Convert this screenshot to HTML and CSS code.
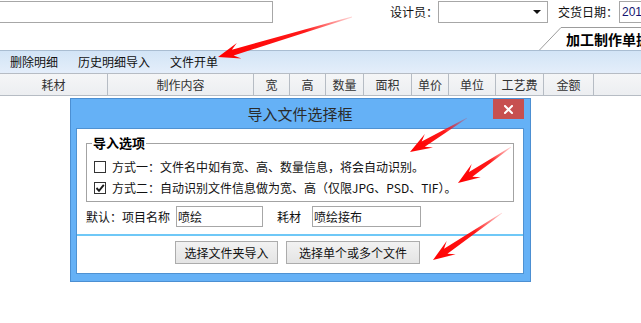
FILE: index.html
```html
<!DOCTYPE html>
<html lang="zh-CN">
<head>
<meta charset="utf-8">
<title>导入文件选择框</title>
<link rel="stylesheet" href="styles.css">
</head>
<body>
<div class="page">
  <div class="topbar">
    <div class="box box-main"></div>
    <span class="lbl lbl-designer">设计员：</span>
    <div class="box select"><span class="caret"></span></div>
    <span class="lbl lbl-date">交货日期：</span>
    <div class="box box-date">2018-06-12</div>
  </div>
  <div class="tabrow">
    <div class="tab">
      <svg class="tab-slant" width="22" height="23" viewBox="0 0 22 23"><line x1="0.5" y1="23" x2="22" y2="0.5" stroke="#9c9c9c" stroke-width="1"/></svg>
      <span class="tab-label">加工制作单据</span>
    </div>
  </div>
  <div class="toolbar">
    <span class="tool">删除明细</span>
    <span class="tool">历史明细导入</span>
    <span class="tool">文件开单</span>
  </div>
  <div class="grid-head">
    <div class="cell c1">耗材</div>
    <div class="cell c2">制作内容</div>
    <div class="cell c3">宽</div>
    <div class="cell c4">高</div>
    <div class="cell c5">数量</div>
    <div class="cell c6">面积</div>
    <div class="cell c7">单价</div>
    <div class="cell c8">单位</div>
    <div class="cell c9">工艺费</div>
    <div class="cell c10">金额</div>
    <div class="cell c11"></div>
  </div>
</div>

<div class="dialog">
  <div class="dialog-title">导入文件选择框</div>
  <div class="dialog-close">
    <svg width="9" height="9" viewBox="0 0 9 9"><path d="M1 1L8 8M8 1L1 8" stroke="#fff" stroke-width="2" stroke-linecap="square"/></svg>
  </div>
  <div class="panel">
    <div class="group">
      <span class="group-title">导入选项</span>
      <div class="opt">
        <span class="chk"></span>
        <span>方式一：文件名中如有宽、高、数量信息，将会自动识别。</span>
      </div>
      <div class="opt">
        <span class="chk"><svg width="10" height="10" viewBox="0 0 10 10"><path d="M1.5 5L4 7.8L8.8 1.8" fill="none" stroke="#1a1a1a" stroke-width="1.9"/></svg></span>
        <span>方式二：自动识别文件信息做为宽、高（仅限JPG、PSD、TIF）。</span>
      </div>
    </div>
    <div class="defaults">
      <span class="def-lbl">默认：项目名称</span>
      <div class="box in-name">喷绘</div>
      <span class="def-lbl2">耗材</span>
      <div class="box in-mat">喷绘接布</div>
    </div>
    <div class="sep"></div>
    <div class="btnrow">
      <div class="btn btn-folder">选择文件夹导入</div>
      <div class="btn btn-files">选择单个或多个文件</div>
    </div>
  </div>
</div>

<svg class="arrows" width="641" height="323" viewBox="0 0 641 323">
  <defs>
    <linearGradient id="g1" gradientUnits="userSpaceOnUse" x1="352" y1="17" x2="218" y2="57">
      <stop offset="0" stop-color="#ff0000" stop-opacity="0.15"/>
      <stop offset="0.35" stop-color="#ff0000" stop-opacity="0.9"/>
      <stop offset="1" stop-color="#ff0000"/>
    </linearGradient>
    <linearGradient id="g2" gradientUnits="userSpaceOnUse" x1="467" y1="118" x2="410" y2="152">
      <stop offset="0" stop-color="#ff0000" stop-opacity="0.15"/>
      <stop offset="0.4" stop-color="#ff0000" stop-opacity="0.9"/>
      <stop offset="1" stop-color="#ff0000"/>
    </linearGradient>
    <linearGradient id="g3" gradientUnits="userSpaceOnUse" x1="511" y1="147" x2="458" y2="183">
      <stop offset="0" stop-color="#ff0000" stop-opacity="0.15"/>
      <stop offset="0.4" stop-color="#ff0000" stop-opacity="0.9"/>
      <stop offset="1" stop-color="#ff0000"/>
    </linearGradient>
    <linearGradient id="g4" gradientUnits="userSpaceOnUse" x1="502" y1="213" x2="433" y2="260">
      <stop offset="0" stop-color="#ff0000" stop-opacity="0.15"/>
      <stop offset="0.4" stop-color="#ff0000" stop-opacity="0.9"/>
      <stop offset="1" stop-color="#ff0000"/>
    </linearGradient>
  </defs>
  <polygon fill="url(#g1)" points="351.9,16.6 231.9,49.7 236.8,43.0 218,57 241.4,58.4 233.6,55.5 352.1,17.4"/>
  <polygon fill="url(#g2)" points="466.8,117.7 421.7,141.5 424.8,133.9 410,152 433.0,147.6 424.8,146.7 467.2,118.3"/>
  <polygon fill="url(#g3)" points="510.8,146.7 469.0,171.9 471.7,164.0 458,183 480.7,177.3 472.4,176.8 511.2,147.3"/>
  <polygon fill="url(#g4)" points="501.8,212.7 444.0,248.8 446.7,241.0 433,260 455.7,254.2 447.4,253.8 502.2,213.3"/>
</svg>
</body>
</html>
```

FILE: styles.css
```css
html, body {
  margin: 0;
  padding: 0;
  width: 641px;
  height: 323px;
  overflow: hidden;
  background: #fff;
}

body {
  position: relative;
  font-family: "Noto Sans CJK SC", "Liberation Sans", sans-serif;
  font-size: 12px;
  color: #111;
}

.page {
  width: 641px;
  overflow: hidden;
}

/* top bar */
.topbar {
  display: flex;
  align-items: flex-start;
  height: 23px;
  padding-top: 1px;
  box-sizing: border-box;
  white-space: nowrap;
}

.box {
  box-sizing: border-box;
  border: 1px solid #a7a7a7;
  background: #fff;
  height: 22px;
  line-height: 20px;
  padding-left: 2px;
  overflow: hidden;
  white-space: nowrap;
  flex-shrink: 0;
}

.box-main {
  margin-left: -10px;
  width: 283px;
}

.lbl {
  line-height: 22px;
  flex-shrink: 0;
}

.lbl-designer {
  margin-left: 117px;
  width: 48px;
}

.select {
  width: 110px;
  position: relative;
}

.caret {
  position: absolute;
  right: 6px;
  top: 8px;
  width: 0;
  height: 0;
  border-left: 4px solid transparent;
  border-right: 4px solid transparent;
  border-top: 4px solid #111;
}

.lbl-date {
  margin-left: 10px;
  width: 61px;
}

.box-date {
  width: 110px;
  color: #141470;
  font-family: "Liberation Sans", sans-serif;
  font-size: 12px;
}

/* tab row */
.tabrow {
  display: flex;
  height: 27px;
}

.tab {
  margin-left: auto;
  width: 102px;
  display: flex;
  align-items: flex-end;
  overflow: hidden;
  flex-shrink: 0;
}

.tab-slant {
  display: block;
  flex-shrink: 0;
}

.tab-label {
  flex-shrink: 0;
  box-sizing: border-box;
  height: 23px;
  border-top: 1px solid #9c9c9c;
  padding-left: 5px;
  padding-top: 1px;
  line-height: 21px;
  font-size: 14px;
  font-weight: bold;
  color: #000;
  white-space: nowrap;
}

/* toolbar */
.toolbar {
  display: flex;
  gap: 20px;
  height: 23px;
  box-sizing: border-box;
  border-top: 1px solid #a9bdd2;
  background: linear-gradient(#d2e4f6, #e4eefa);
  padding-left: 10px;
  line-height: 22px;
  color: #111;
}

/* grid header */
.grid-head {
  display: flex;
  height: 23px;
  box-sizing: border-box;
  border-top: 1px solid #b6bcc4;
  border-bottom: 1px solid #b6bcc4;
  background: linear-gradient(#f5f6f7, #eceef1);
}

.cell {
  box-sizing: border-box;
  border-right: 1px solid #b6bcc4;
  text-align: center;
  line-height: 21px;
  color: #333;
  flex-shrink: 0;
}

.c1 { width: 108px; }
.c2 { width: 146px; }
.c3 { width: 36px; }
.c4 { width: 36px; }
.c5 { width: 38px; }
.c6 { width: 48px; }
.c7 { width: 37px; }
.c8 { width: 47px; }
.c9 { width: 48px; }
.c10 { width: 50px; }
.c11 { flex: 1; border-right: none; }

/* dialog */
.dialog {
  position: absolute;
  left: 70px;
  top: 98px;
  width: 461px;
  box-sizing: border-box;
  border: 1px solid #4c8fd2;
  background: #65b1f6;
  padding: 0 6px 7px 5px;
}

.dialog-title {
  height: 29px;
  line-height: 29px;
  text-align: center;
  font-size: 15px;
  color: #2a2a2a;
}

.dialog-close {
  position: absolute;
  top: 0;
  right: 6px;
  width: 31px;
  height: 20px;
  background: #c75050;
  display: flex;
  align-items: center;
  justify-content: center;
}

.dialog-close svg {
  display: block;
}

.panel {
  background: #fff;
  border: 1px solid #4f92d2;
  padding-bottom: 9px;
}

.group {
  position: relative;
  margin: 14px 9px 0 9px;
  border: 1px solid #a3a3a3;
  padding: 12px 0 3px 7px;
}

.group-title {
  position: absolute;
  top: -11px;
  left: 5px;
  padding: 0 1px;
  background: #fff;
  font-size: 13px;
  font-weight: bold;
  line-height: 20px;
  color: #000;
}

.opt {
  display: flex;
  align-items: center;
  height: 21px;
  white-space: nowrap;
  color: #111;
}

.chk {
  box-sizing: border-box;
  width: 12px;
  height: 12px;
  border: 1px solid #333;
  background: #fff;
  margin-right: 6px;
  display: flex;
  align-items: center;
  justify-content: center;
  flex-shrink: 0;
}

.chk svg {
  display: block;
}

.defaults {
  display: flex;
  align-items: center;
  margin-top: 4px;
  padding-left: 9px;
  height: 21px;
  white-space: nowrap;
}

.defaults .box {
  height: 21px;
  line-height: 19px;
  padding-left: 1px;
}

.def-lbl {
  width: 84px;
}

.in-name {
  margin-left: 6px;
  width: 87px;
}

.def-lbl2 {
  margin-left: 14px;
}

.in-mat {
  margin-left: 11px;
  width: 109px;
}

.sep {
  margin-top: 7px;
  height: 2px;
  background: #6fc8f7;
}

.btnrow {
  display: flex;
  gap: 8px;
  margin-top: 5px;
  padding-left: 98px;
}

.btn {
  box-sizing: border-box;
  height: 23px;
  line-height: 21px;
  border: 1px solid #acacac;
  background: linear-gradient(#f2f2f2, #e4e4e4);
  text-align: center;
  color: #111;
  white-space: nowrap;
}

.btn-folder { width: 103px; }
.btn-files { width: 134px; }

/* annotation arrows */
.arrows {
  position: absolute;
  left: 0;
  top: 0;
  pointer-events: none;
}
```
